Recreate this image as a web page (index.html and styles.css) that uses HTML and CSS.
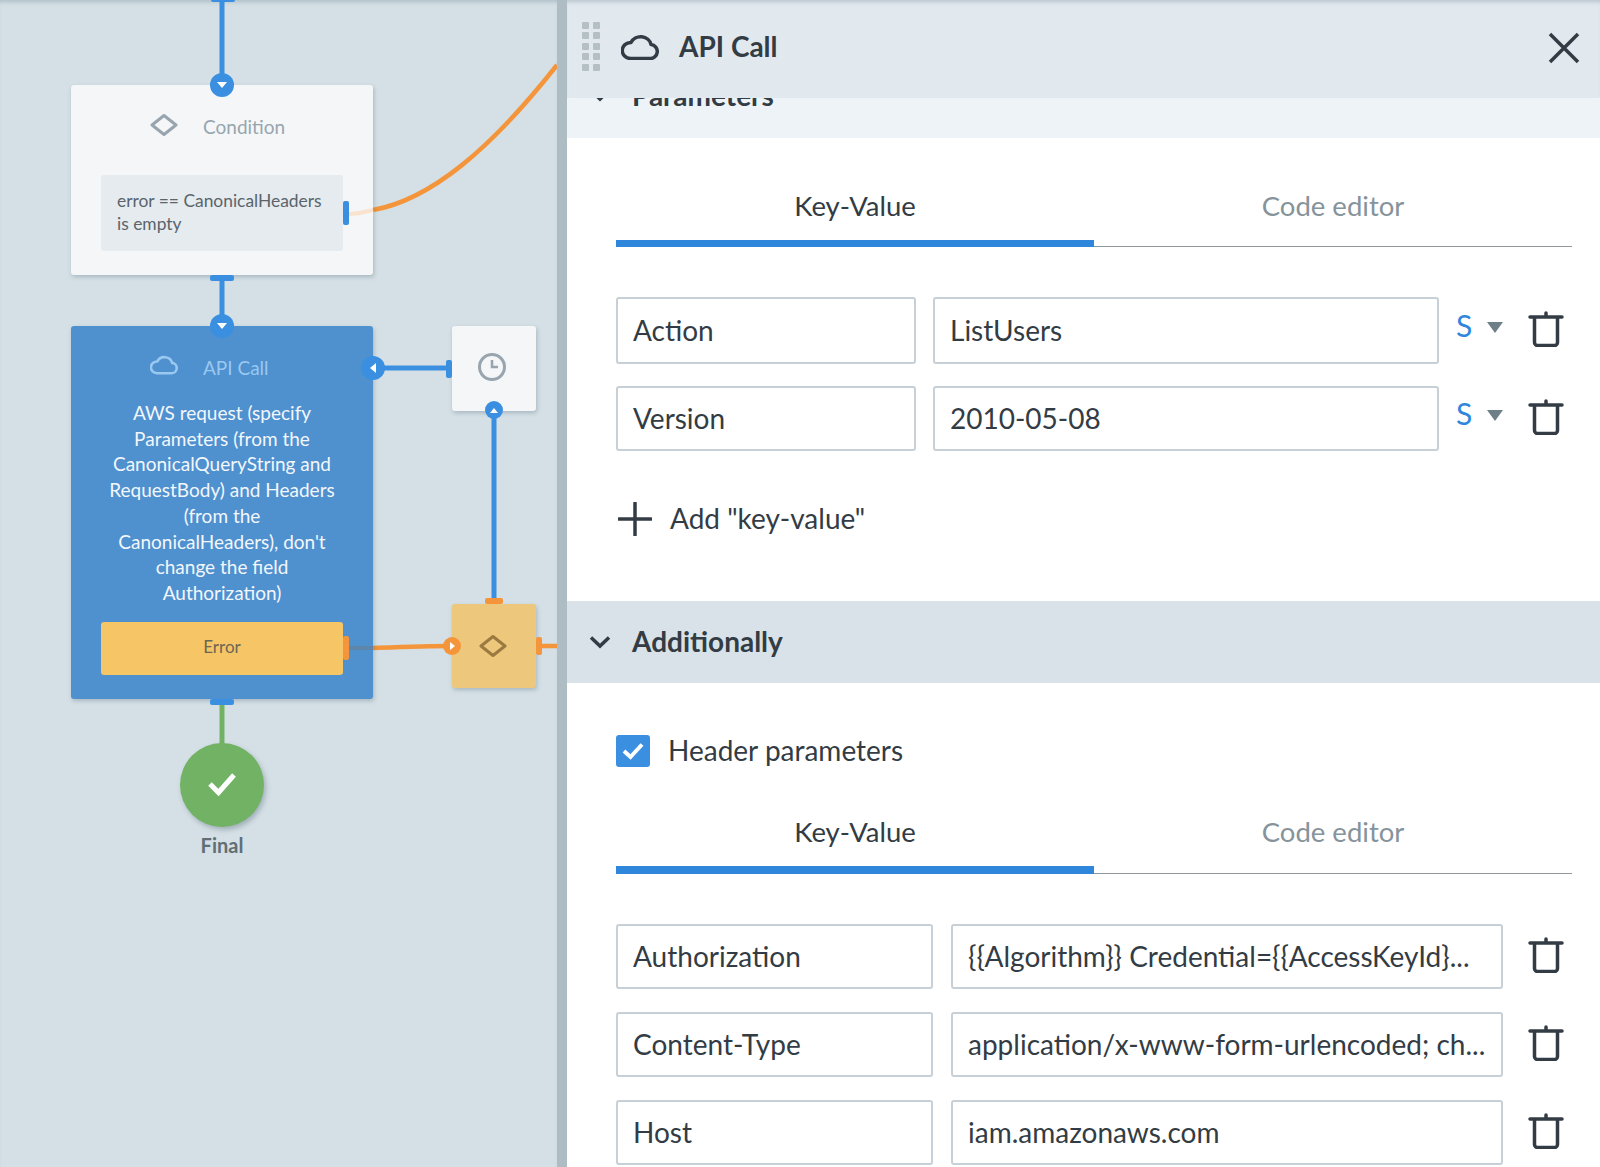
FILE: index.html

```html
<!DOCTYPE html>
<html>
<head>
	<title>API Call</title>
	<link rel="stylesheet" href="styles.css">
</head>
<body>
	<svg class="defs" width="0" height="0">
		<symbol id="cloud" viewBox="0 0 38 28">
			<path d="M9.500 26.500H28.500a7 7 0 0 0 1.500-14A10.500 9.500 0 0 0 10 10.500A8.500 8 0 0 0 9.500 26.500z" fill="none" stroke="currentColor" stroke-width="3.500" stroke-linejoin="round"/>
		</symbol>
		<symbol id="diamond" viewBox="0 0 28 24">
			<path d="M14 2.500L26 12L14 21.500L2 12z" fill="none" stroke="currentColor" stroke-width="3" stroke-linejoin="round"/>
		</symbol>
		<symbol id="trash" viewBox="0 0 36 36">
			<path d="M2 6h32M18 2v4M6.500 6v25.500a3 3 0 0 0 3 3h17a3 3 0 0 0 3-3V6" fill="none" stroke="currentColor" stroke-width="3.500" stroke-linecap="round"/>
		</symbol>
	</svg>

	<div class="canvas">
		<svg class="wires" width="557" height="1167">
			<path d="M222 0V85M222 280V326M373 368H446M494 410V600" class="wire-blue"/>
			<path d="M373 210C430 200 490 150 557 65" class="wire-orange"/>
			<path d="M373 648C400 647 425 646 452 646M542 646H557" class="wire-orange"/>
			<path d="M222 705V745" class="wire-green"/>
		</svg>

		<span class="port port-top" style="left:211px;top:-4px"></span>

		<div class="node node-light node-condition">
			<div class="node-head">
				<svg class="node-icon"><use href="#diamond"/></svg>
				<span>Condition</span>
			</div>
			<div class="node-case">error == CanonicalHeaders is empty</div>
			<span class="port port-right" style="left:272px;top:116px"></span>
			<span class="port port-bottom" style="left:139px;top:190px"></span>
		</div>

		<div class="node node-blue node-api">
			<div class="node-head">
				<svg class="node-icon"><use href="#cloud"/></svg>
				<span>API Call</span>
			</div>
			<p class="node-text">AWS request (specify Parameters (from the CanonicalQueryString and RequestBody) and Headers (from the CanonicalHeaders), don't change the field Authorization)</p>
			<div class="node-error">Error</div>
			<span class="port port-right port-orange" style="left:272px;top:310px"></span>
			<span class="port port-bottom" style="left:139px;top:373px"></span>
		</div>

		<svg class="wires wires-over" width="557" height="1167">
			<path d="M349 214C358 214 365 212 373 210" class="wire-pale"/>
			<path d="M349 648H373" class="wire-muted"/>
		</svg>

		<div class="node node-light node-timer">
			<svg class="timer-icon" width="30" height="30" viewBox="0 0 30 30">
				<circle cx="15" cy="15" r="12.500" fill="none" stroke="currentColor" stroke-width="3"/>
				<path d="M15 8v7h6" fill="none" stroke="currentColor" stroke-width="2.500"/>
			</svg>
		</div>

		<div class="node node-gate">
			<svg class="gate-icon"><use href="#diamond"/></svg>
			<span class="port port-top port-orange" style="left:33px;top:-6px"></span>
			<span class="port port-right port-orange" style="left:84px;top:33px;height:18px"></span>
		</div>

		<span class="port port-left" style="left:446px;top:360px"></span>

		<span class="pin" style="left:210px;top:73px"><i class="tri tri-down"></i></span>
		<span class="pin" style="left:210px;top:314px"><i class="tri tri-down"></i></span>
		<span class="pin" style="left:361px;top:356px"><i class="tri tri-left"></i></span>
		<span class="pin pin-small" style="left:485px;top:401px"><i class="tri tri-up"></i></span>
		<span class="pin pin-small pin-orange" style="left:443px;top:637px"><i class="tri tri-right"></i></span>

		<div class="final">
			<span class="final-dot">
				<svg width="30" height="26" viewBox="0 0 30 26"><path d="M3 12L11.500 20.500L27 3" fill="none" stroke="#fff" stroke-width="5"/></svg>
			</span>
			<span class="final-label">Final</span>
		</div>
	</div>

	<div class="divider"></div>

	<div class="panel">
		<div class="panel-head">
			<span class="grip"><i></i><i></i><i></i><i></i><i></i><i></i><i></i><i></i><i></i><i></i></span>
			<svg class="panel-cloud"><use href="#cloud"/></svg>
			<span class="panel-title">API Call</span>
			<svg class="panel-close" width="32" height="32" viewBox="0 0 32 32"><path d="M2 2L30 30M30 2L2 30" fill="none" stroke="currentColor" stroke-width="3.500"/></svg>
		</div>

		<div class="panel-body">
			<div class="section-head section-params">
				<svg class="chevron" width="22" height="14" viewBox="0 0 22 14"><path d="M2 2.500L11 11L20 2.500" fill="none" stroke="currentColor" stroke-width="3.500"/></svg>
				<span>Parameters</span>
			</div>
			<div class="section">
				<div class="tabs">
					<div class="tab tab-active">Key-Value</div>
					<div class="tab">Code editor</div>
				</div>
				<div class="rows">
					<div class="row row-typed row-tall">
						<div class="field field-key">Action</div>
						<div class="field field-value">ListUsers</div>
						<span class="type">S</span>
						<i class="type-arrow"></i>
						<svg class="trash"><use href="#trash"/></svg>
					</div>
					<div class="row row-typed">
						<div class="field field-key">Version</div>
						<div class="field field-value">2010-05-08</div>
						<span class="type">S</span>
						<i class="type-arrow"></i>
						<svg class="trash"><use href="#trash"/></svg>
					</div>
				</div>
				<div class="add">
					<svg width="34" height="34" viewBox="0 0 34 34"><path d="M17 1V33M1 17H33" fill="none" stroke="currentColor" stroke-width="3.500" stroke-linecap="round"/></svg>
					<span>Add "key-value"</span>
				</div>
			</div>

			<div class="section-head">
				<svg class="chevron" width="22" height="14" viewBox="0 0 22 14"><path d="M2 2.500L11 11L20 2.500" fill="none" stroke="currentColor" stroke-width="3.500"/></svg>
				<span class="section-label">Additionally</span>
			</div>
			<div class="section">
				<label class="check">
					<span class="check-box">
						<svg width="24" height="20" viewBox="0 0 24 20"><path d="M3 10L9.500 16L21 3.500" fill="none" stroke="#fff" stroke-width="4"/></svg>
					</span>
					<span class="check-label">Header parameters</span>
				</label>
				<div class="tabs tabs-second">
					<div class="tab tab-active">Key-Value</div>
					<div class="tab">Code editor</div>
				</div>
				<div class="rows rows-second">
					<div class="row row-plain">
						<div class="field">Authorization</div>
						<div class="field">{{Algorithm}} Credential={{AccessKeyId}...</div>
						<svg class="trash"><use href="#trash"/></svg>
					</div>
					<div class="row row-plain">
						<div class="field">Content-Type</div>
						<div class="field">application/x-www-form-urlencoded; ch...</div>
						<svg class="trash"><use href="#trash"/></svg>
					</div>
					<div class="row row-plain">
						<div class="field">Host</div>
						<div class="field">iam.amazonaws.com</div>
						<svg class="trash"><use href="#trash"/></svg>
					</div>
				</div>
			</div>
		</div>
	</div>
</body>
</html>
```

FILE: styles.css

```css
html, body {
	margin: 0;
	height: 100%;
	overflow: hidden;
}
body {
	display: flex;
	width: 1600px;
	height: 1167px;
	background: #d4e0e5;
	color: #333c44;
	font-family: Lato, "Open Sans", sans-serif;
}
.defs {
	position: absolute;
}

/* canvas */
.canvas {
	position: relative;
	width: 557px;
	flex: none;
	box-shadow: inset 0 5px 4px -3px rgba(90, 110, 125, 0.3);
}
.wires {
	position: absolute;
	left: 0;
	top: 0;
	fill: none;
	stroke-width: 4;
}
.wire-blue { stroke: #3a8fe0; stroke-width: 5; }
.wire-orange { stroke: #f4953b; stroke-width: 4.500; }
.wire-pale { stroke: #f9e3cf; }
.wire-muted { stroke: #5e85aa; }
.wire-green { stroke: #72b264; stroke-width: 5; }

.node {
	position: absolute;
	left: 71px;
	width: 302px;
	border-radius: 3px;
	box-shadow: 1px 2px 4px rgba(70, 90, 105, 0.3);
	box-sizing: border-box;
}
.node-light {
	background: #f4f6f8;
	color: #98a5ae;
}
.node-blue {
	background: #4f90cf;
	color: #99c8f0;
}
.node-condition {
	top: 85px;
	height: 190px;
}
.node-api {
	top: 326px;
	height: 373px;
}
.node-head {
	display: flex;
	align-items: center;
	gap: 25px;
	height: 82px;
	padding-left: 79px;
	font-size: 19px;
}
.node-icon {
	width: 28px;
	height: 24px;
	margin-top: -2px;
}
.node-api .node-icon {
	margin-top: -6px;
}
.node-case {
	margin: 8px 30px 0;
	height: 76px;
	padding: 14px 16px;
	box-sizing: border-box;
	background: #e5ebee;
	border-radius: 3px;
	color: #5a646c;
	font-size: 17.400px;
	line-height: 23px;
}
.node-text {
	margin: -8px 32px 0;
	color: #f2f7fb;
	font-size: 19px;
	line-height: 25.700px;
	text-align: center;
}
.node-error {
	margin: 16px 30px 0;
	height: 53px;
	line-height: 50px;
	background: #f6c566;
	border-radius: 3px;
	color: #6b6753;
	font-size: 17px;
	text-align: center;
}
.node-timer {
	left: 452px;
	top: 326px;
	width: 84px;
	height: 85px;
}
.timer-icon {
	display: block;
	margin: 26px 0 0 25px;
}
.node-gate {
	left: 452px;
	top: 604px;
	width: 84px;
	height: 84px;
	background: #edc77b;
	color: #9a7a40;
}
.gate-icon {
	display: block;
	width: 28px;
	height: 24px;
	margin: 30px 0 0 27px;
}

.port {
	position: absolute;
	background: #3a8fe0;
	border-radius: 2px;
}
.port-top, .port-bottom {
	width: 24px;
	height: 6px;
}
.port-right {
	width: 6px;
	height: 24px;
}
.port-left {
	width: 6px;
	height: 18px;
}
.port-orange {
	background: #f4953b;
}
.node-gate .port-top {
	width: 18px;
}
.pin {
	position: absolute;
	display: flex;
	align-items: center;
	justify-content: center;
	width: 24px;
	height: 24px;
	border-radius: 50%;
	background: #3a8fe0;
}
.pin-small {
	width: 18px;
	height: 18px;
}
.pin-orange {
	background: #f4953b;
}
.tri {
	width: 0;
	height: 0;
	border: 5px solid transparent;
}
.tri-down {
	border-top: 6px solid #fff;
	border-bottom: 0;
}
.tri-up {
	border-width: 0 4px 5px;
	border-bottom-color: #fff;
}
.tri-left {
	border-right: 6px solid #fff;
	border-left: 0;
}
.tri-right {
	border-width: 4px 0 4px 5px;
	border-left-color: #fff;
}

.final {
	position: absolute;
	left: 172px;
	top: 743px;
	width: 100px;
	display: flex;
	flex-direction: column;
	align-items: center;
}
.final-dot {
	display: flex;
	align-items: center;
	justify-content: center;
	width: 84px;
	height: 84px;
	border-radius: 50%;
	background: #72b264;
	box-shadow: 2px 3px 5px rgba(70, 90, 105, 0.35);
}
.final-label {
	margin-top: 6px;
	color: #616e76;
	font-size: 20px;
	font-weight: 700;
}

.divider {
	width: 10px;
	flex: none;
	background: #aebcc4;
}

/* panel */
.panel {
	flex: 1;
	display: flex;
	flex-direction: column;
	min-width: 0;
	background: #fff;
}
.panel-head {
	position: relative;
	z-index: 1;
	display: flex;
	align-items: center;
	box-sizing: border-box;
	height: 98px;
	padding-bottom: 6px;
	flex: none;
	background: #e1e9ef;
	box-shadow: inset 0 5px 4px -3px rgba(90, 110, 125, 0.3);
}
.grip {
	display: grid;
	grid-template-columns: 7px 7px;
	gap: 3.500px 4px;
	margin-left: 15px;
}
.grip i {
	height: 7px;
	background: #b5bfc6;
	border-radius: 1px;
}
.panel-cloud {
	width: 38px;
	height: 28px;
	margin-left: 21px;
}
.panel-title {
	margin-left: 20px;
	font-size: 28px;
	font-weight: 700;
}
.panel-close {
	margin: 4px 20px 0 auto;
}
.panel-body {
	flex: 1;
	overflow: hidden;
}
.section-head {
	display: flex;
	align-items: center;
	gap: 21px;
	height: 82px;
	padding-left: 22px;
	background: #d9e2e8;
	font-size: 28px;
	font-weight: 700;
}
.section-label {
	margin-top: -2px;
}
.section-params {
	height: 86px;
	margin-top: -46px;
	background: #edf3f7;
}
.section {
	padding: 0 28px 0 49px;
}
.tabs {
	display: flex;
	padding-top: 44px;
	border-bottom: 1px solid #8d989f;
}
.tab {
	flex: 1;
	height: 64px;
	line-height: 47px;
	box-sizing: border-box;
	color: #86939b;
	font-size: 27.500px;
	text-align: center;
}
.tab-active {
	height: 65px;
	color: #333c44;
	border-bottom: 7px solid #2f87dc;
	margin-bottom: -1px;
}
.rows {
	display: flex;
	flex-direction: column;
	gap: 22px;
	margin-top: 50px;
}
.row {
	display: flex;
	align-items: center;
}
.field {
	box-sizing: border-box;
	height: 65px;
	line-height: 61px;
	padding: 0 15px;
	border: 2px solid #c6d0d6;
	border-radius: 3px;
	font-size: 28px;
	white-space: nowrap;
	overflow: hidden;
}
.row-tall .field {
	height: 67px;
	line-height: 63px;
}
.field-key {
	width: 300px;
}
.field-value {
	width: 506px;
	margin-left: 17px;
}
.type {
	width: 24px;
	margin: -12px 0 0 17px;
	color: #2f87dc;
	font-size: 30px;
}
.type-arrow {
	width: 0;
	height: 0;
	margin: -6px 0 0 7px;
	border-left: 8px solid transparent;
	border-right: 8px solid transparent;
	border-top: 11px solid #6f7f87;
}
.trash {
	width: 36px;
	height: 36px;
	margin: -3px 8px 0 auto;
}
.add {
	display: flex;
	align-items: center;
	gap: 18px;
	height: 36px;
	margin: 49px 0 65px 2px;
	font-size: 28px;
}
.add svg {
	margin-top: 2px;
}
.check {
	display: flex;
	align-items: center;
	gap: 18px;
	margin-top: 52px;
	font-size: 28px;
}
.check-label {
	margin-top: -3px;
}
.check-box {
	display: flex;
	align-items: center;
	justify-content: center;
	width: 34px;
	height: 32px;
	border-radius: 3px;
	background: #3a8fe0;
}
.tabs-second {
	padding-top: 41px;
}
.tabs-second .tab {
	height: 65px;
}
.tabs-second .tab-active {
	height: 66px;
	border-bottom-width: 8px;
}
.rows-second {
	gap: 23px;
}
.row-plain .field:first-child {
	width: 317px;
}
.row-plain .field:nth-child(2) {
	width: 552px;
	margin-left: 18px;
}
```
